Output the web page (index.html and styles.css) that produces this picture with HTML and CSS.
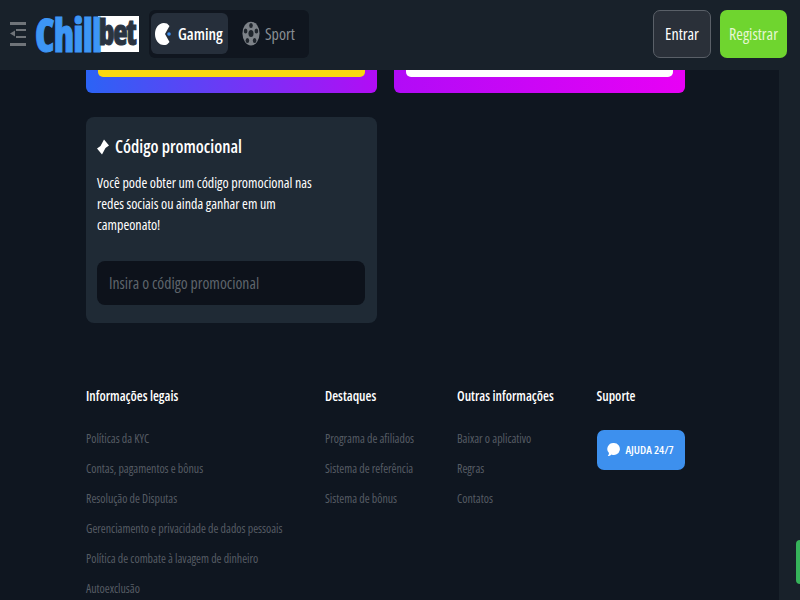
FILE: index.html
```html
<!DOCTYPE html>
<html lang="pt-BR">
<head>
    <meta charset="UTF-8">
    <meta name="viewport" content="width=device-width, initial-scale=1.0">
    <title>Chillbet</title>
    <link rel="stylesheet" href="styles.css">
</head>
<body>
    <header class="topbar">
        <svg class="menu-icon" width="18" height="24" viewBox="0 0 18 24">
            <path d="M1 0h16v3H1zM7 7h10v2H7zM7 14h10v2H7zM1 21h16v3H1z" fill="#6f7479"/>
            <path d="M1 11.500l5-3v6z" fill="#6f7479"/>
        </svg>
        <div class="logo">
            <div class="logo-chill"><span>Chill</span></div>
            <div class="logo-bet"><span>bet</span></div>
        </div>
        <div class="mode-switch">
            <div class="mode mode-active">
                <svg width="20" height="24" viewBox="0 0 20 24">
                    <path d="M13 1.500C6 -1 1 5 1 12s5 13 12 10.500L15.500 20 11 12l4.500-8z" fill="#fff"/>
                    <circle cx="15" cy="12" r="1.800" fill="#3d8ff0"/>
                </svg>
                <span>Gaming</span>
            </div>
            <div class="mode">
                <svg width="18" height="25" viewBox="0 0 20 20" preserveAspectRatio="none">
                    <circle cx="10" cy="10" r="9.500" fill="#7d8288"/>
                    <circle cx="10" cy="10" r="2.800" fill="#20262d"/>
                    <circle cx="10" cy="3.500" r="2" fill="#20262d"/>
                    <circle cx="4" cy="8" r="2" fill="#20262d"/>
                    <circle cx="16" cy="8" r="2" fill="#20262d"/>
                    <circle cx="6" cy="15.500" r="2" fill="#20262d"/>
                    <circle cx="14" cy="15.500" r="2" fill="#20262d"/>
                </svg>
                <span>Sport</span>
            </div>
        </div>
        <div class="auth">
            <button class="btn btn-login">Entrar</button>
            <button class="btn btn-register">Registrar</button>
        </div>
    </header>

    <div class="layout">
        <main class="content">
            <div class="banners">
                <div class="banner banner-yellow"><div class="banner-inner inner-yellow"></div></div>
                <div class="banner banner-pink"><div class="banner-inner inner-white"></div></div>
            </div>

            <section class="promo">
                <h2>
                    <svg width="12" height="16" viewBox="0 0 12 16">
                        <path d="M7 .5L12 6.500 8.500 9 5 15.500 0 9.500 3.500 7z" fill="#fff"/>
                    </svg>
                    Código promocional
                </h2>
                <p>Você pode obter um código promocional nas redes sociais ou ainda ganhar em um campeonato!</p>
                <input class="promo-input" type="text" placeholder="Insira o código promocional">
            </section>

            <footer class="links">
                <div class="col col-legal">
                    <h3>Informações legais</h3>
                    <ul>
                        <li>Políticas da KYC</li>
                        <li>Contas, pagamentos e bônus</li>
                        <li>Resolução de Disputas</li>
                        <li>Gerenciamento e privacidade de dados pessoais</li>
                        <li>Política de combate à lavagem de dinheiro</li>
                        <li>Autoexclusão</li>
                    </ul>
                </div>
                <div class="col col-highlights">
                    <h3>Destaques</h3>
                    <ul>
                        <li>Programa de afiliados</li>
                        <li>Sistema de referência</li>
                        <li>Sistema de bônus</li>
                    </ul>
                </div>
                <div class="col col-other">
                    <h3>Outras informações</h3>
                    <ul>
                        <li>Baixar o aplicativo</li>
                        <li>Regras</li>
                        <li>Contatos</li>
                    </ul>
                </div>
                <div class="col">
                    <h3>Suporte</h3>
                    <button class="help">
                        <svg width="14" height="15" viewBox="0 0 14 15">
                            <path d="M7 1a6 6 0 1 1-2.500 11.500C3.500 13.500 2 14 .8 14c.8-.8 1.200-1.800 1.200-2.900A6 6 0 0 1 7 1z" fill="#fff"/>
                        </svg>
                        AJUDA 24/7
                    </button>
                </div>
            </footer>
        </main>
        <aside class="side">
            <div class="side-tab"></div>
        </aside>
    </div>
</body>
</html>
```

FILE: styles.css
```css
* {
    box-sizing: border-box;
}

html, body {
    height: 100%;
}

body {
    margin: 0;
    height: 600px;
    overflow: hidden;
    background-color: #0f1620;
    color: #fff;
    font-family: "Open Sans", "Noto Sans", sans-serif;
    font-stretch: 75%;
}

.topbar {
    height: 70px;
    display: flex;
    align-items: center;
    padding: 0 13px 2px 9px;
    background-color: #18212a;
}

.menu-icon {
    flex: none;
}

.logo {
    display: flex;
    align-items: stretch;
    margin-left: 8px;
    height: 36px;
    font-weight: 800;
}

.logo-chill {
    width: 63px;
    color: #3d96f5;
    font-size: 46px;
    line-height: 36px;
    letter-spacing: -1px;
    white-space: nowrap;
    -webkit-text-stroke: 1px #3d96f5;
}

.logo-chill span {
    display: inline-block;
    transform: scaleX(.84);
    transform-origin: left center;
}

.logo-bet {
    width: 41px;
    padding-left: 1px;
    background-color: #fff;
    color: #2a3441;
    font-size: 36px;
    line-height: 32px;
    letter-spacing: -1.500px;
    -webkit-text-stroke: 1px #2a3441;
}

.logo-bet span {
    display: inline-block;
    transform: scaleX(.82);
    transform-origin: left center;
}

.mode-switch {
    display: flex;
    margin-left: 10px;
    padding: 3px 2px 4px;
    width: 160px;
    height: 48px;
    border-radius: 6px;
    background-color: #10161f;
}

.mode {
    display: flex;
    align-items: center;
    gap: 5px;
    padding-left: 14px;
    color: #8a8f94;
    font-size: 16px;
    font-weight: 500;
}

.mode svg {
    flex: none;
}

.mode-active {
    flex: none;
    gap: 4px;
    width: 77px;
    padding-left: 3px;
    border-radius: 6px;
    background-color: #262f3b;
    color: #fff;
    font-size: 15.800px;
    font-weight: 600;
}

.auth {
    display: flex;
    gap: 9px;
    margin-left: auto;
}

.btn {
    height: 48px;
    padding: 0;
    border-radius: 7px;
    font-family: inherit;
    font-stretch: inherit;
    font-size: 16px;
    font-weight: 500;
}

.btn-login {
    width: 58px;
    border: 1px solid #5a6068;
    background-color: #2a3039;
    color: #fff;
}

.btn-register {
    width: 67px;
    border: none;
    background-color: #6fd52f;
    color: #e6f7d4;
}

.layout {
    display: flex;
    height: 530px;
}

.content {
    flex: 1;
    padding: 0 94px 0 86px;
    overflow: hidden;
}

.side {
    width: 21px;
    padding-top: 470px;
    background-color: #18212a;
}

.side-tab {
    width: 4px;
    height: 44px;
    margin-left: 17px;
    border-radius: 4px 0 0 4px;
    background-color: #36b35a;
}

.banners {
    display: flex;
    gap: 17px;
}

.banner {
    width: 291px;
    height: 23px;
    padding: 0 12px;
    border-radius: 0 0 6px 6px;
}

.banner-yellow {
    background: linear-gradient(90deg, #2b63f5, #b20cf5);
}

.banner-pink {
    background: linear-gradient(90deg, #b10bf7, #e800f5);
}

.banner-inner {
    height: 7px;
    border-radius: 0 0 5px 5px;
}

.inner-yellow {
    background-color: #f9d90f;
}

.inner-white {
    background-color: #fff;
}

.promo {
    width: 291px;
    height: 206px;
    margin-top: 24px;
    padding: 18px 12px 0 11px;
    border-radius: 8px;
    background-color: #1f2a35;
}

.promo h2 {
    display: flex;
    align-items: center;
    gap: 6px;
    margin: 0;
    font-size: 17.300px;
    font-weight: 600;
    line-height: 24px;
}

.promo p {
    margin: 13px 0 0;
    width: 225px;
    font-size: 14px;
    line-height: 21px;
}

.promo-input {
    display: block;
    width: 100%;
    height: 44px;
    margin-top: 26px;
    padding: 0 12px;
    border: none;
    border-radius: 8px;
    background-color: #0d121b;
    color: #fff;
    font-family: inherit;
    font-stretch: inherit;
    font-size: 15.700px;
}

.promo-input::placeholder {
    color: #5f656c;
    opacity: 1;
}

.links {
    display: flex;
    margin-top: 64px;
}

.col h3 {
    margin: 0;
    font-size: 13.500px;
    font-weight: 600;
    line-height: 18px;
}

.col ul {
    list-style: none;
    margin: 24px 0 0;
    padding: 0;
}

.col li {
    height: 30px;
    color: #565c64;
    font-size: 11.850px;
    line-height: 18px;
}

.col-legal {
    width: 239px;
}

.col-highlights {
    width: 132px;
}

.col-other {
    width: 139.500px;
}

.help {
    display: flex;
    align-items: center;
    gap: 5px;
    width: 88px;
    height: 40px;
    margin-top: 25px;
    padding: 0 0 1px 10px;
    border: none;
    border-radius: 7px;
    background-color: #3d90ee;
    color: #fff;
    font-family: inherit;
    font-stretch: inherit;
    font-size: 11.500px;
    font-weight: 600;
}
```
